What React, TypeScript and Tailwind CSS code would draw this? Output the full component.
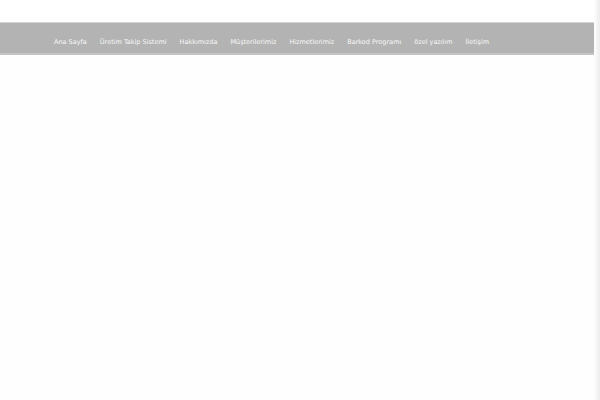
import React from 'react';

const links = [
  'Ana Sayfa',
  'Üretim Takip Sistemi',
  'Hakkımızda',
  'Müşterilerimiz',
  'Hizmetlerimiz',
  'Barkod Programı',
  'özel yazılım',
  'İletişim',
];

const App: React.FC = () => {
  return (
    <div className="flex h-[400px] w-[600px] overflow-hidden bg-white" style={{ fontFamily: '"DejaVu Sans", sans-serif' }}>
      <div className="flex-1 bg-[#fefefe]">
        <div className="h-[22px] bg-white" />
        <nav className="h-[33px] border-t border-[#d6d6d6] border-b-2 border-b-[#c4c4c4] bg-[#b3b3b3] pl-[54px] pt-[16px]">
          <ul className="flex items-center gap-[13px]">
            {links.map((l) => (
              <li key={l} className="text-[6.5px] leading-none text-[#f8f8f8]">
                {l}
              </li>
            ))}
          </ul>
        </nav>
      </div>
      <div className="w-[6px] bg-gradient-to-r from-[#fefefe] to-[#ececec]" />
    </div>
  );
};

export default App;
